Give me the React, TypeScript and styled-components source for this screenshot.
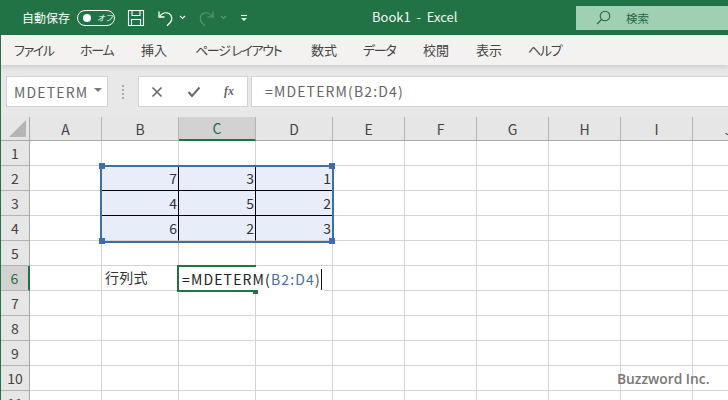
import React from "react";
import styled, { createGlobalStyle } from "styled-components";

const FONT = `"Noto Sans CJK JP", "Noto Sans", sans-serif`;

const Global = createGlobalStyle`
  html, body { margin: 0; padding: 0; background: #fff; }
  body { font-family: ${FONT}; }
`;

const Page = styled.div`
  position: relative;
  width: 728px;
  height: 400px;
  overflow: hidden;
  display: flex;
  flex-direction: column;
  background: #e6e6e6;
  font-family: ${FONT};
`;

const TitleBar = styled.header`
  position: relative;
  flex: 0 0 35px;
  display: flex;
  align-items: center;
  background: #217346;
  color: #fff;
  padding-left: 22px;
`;
const AutoSave = styled.span`
  font-size: 12px;
  width: 48px;
  white-space: nowrap;
`;
const Toggle = styled.span`
  margin-left: 7px;
  width: 38px;
  height: 16px;
  box-sizing: border-box;
  border: 1px solid #fff;
  border-radius: 8px;
  display: flex;
  align-items: center;
  padding-left: 5px;
  gap: 6px;
`;
const Knob = styled.span`
  width: 8px;
  height: 8px;
  border-radius: 50%;
  background: #fff;
`;
const ToggleLabel = styled.span`
  font-size: 8px;
  font-style: italic;
  line-height: 1;
  white-space: nowrap;
`;
const Qat = styled.div`
  display: flex;
  align-items: center;
  margin-left: 12px;
`;
const QatIcon = styled.svg<{ $gap?: number }>`
  display: block;
  margin-left: ${(p) => p.$gap ?? 0}px;
`;
const DocTitle = styled.div`
  position: absolute;
  left: 372px;
  top: 8px;
  font-size: 13px;
  line-height: 18px;
  white-space: pre;
  color: #f2f7f4;
`;
const SearchBox = styled.div`
  margin-left: auto;
  width: 152px;
  height: 24px;
  background: #9fd0b3;
  color: #1c6a3f;
  display: flex;
  align-items: center;
  padding-left: 20px;
  box-sizing: border-box;
  gap: 15px;
  font-size: 11.5px;
`;

const MenuBar = styled.nav`
  flex: 0 0 30px;
  display: flex;
  align-items: center;
  background: #f3f2f1;
  color: #444;
  box-shadow: 0 2px 5px rgba(0, 0, 0, 0.12);
  position: relative;
  z-index: 1;
  padding: 0 0 1px 14px;
  box-sizing: border-box;
`;
const MenuItem = styled.span<{ $w: number; $kana?: boolean }>`
  width: ${(p) => p.$w}px;
  font-size: 13px;
  font-feature-settings: "palt";
  letter-spacing: ${(p) => (p.$kana ? "-1.3px" : "0")};
  white-space: pre;
`;

const FormulaArea = styled.div`
  flex: 0 0 52px;
  box-sizing: border-box;
  padding: 11px 0 10px 6px;
  display: flex;
  align-items: stretch;
  background: #e8e8e8;
`;
const Box = styled.div`
  background: #fff;
  border: 1px solid #d2d2d2;
  box-sizing: border-box;
  display: flex;
  align-items: center;
`;
const NameBox = styled(Box)`
  width: 102px;
  padding-left: 7px;
  color: #666;
  font-size: 14px;
  letter-spacing: 1.15px;
  position: relative;
`;
const Caret = styled.span`
  position: absolute;
  left: 87px;
  top: 11px;
  width: 0;
  height: 0;
  border-left: 4px solid transparent;
  border-right: 4px solid transparent;
  border-top: 4px solid #7a7a7a;
`;
const Dots = styled.div`
  width: 30px;
  display: flex;
  flex-direction: column;
  align-items: center;
  justify-content: center;
  gap: 2px;
`;
const Dot = styled.span`
  width: 2px;
  height: 2px;
  background: #aaa;
`;
const FxBox = styled(Box)`
  width: 110px;
  justify-content: space-between;
  padding: 0 13px 0 12px;
`;
const FxLabel = styled.span`
  font-family: "Liberation Serif", serif;
  font-style: italic;
  font-weight: bold;
  font-size: 12px;
  color: #666;
`;
const FormulaInput = styled(Box)`
  margin-left: 3px;
  flex: 1;
  padding: 0 0 2px 13px;
  color: #666;
  font-size: 14px;
  letter-spacing: 1.15px;
  border-right: none;
`;

const Sheet = styled.div`
  position: relative;
  flex: 1;
  display: grid;
  grid-template-columns: 30px 72px 77px 77px 77px 72px 72px 72px 72px 72px 72px;
  grid-template-rows: 24px repeat(11, 25px);
  background: #fff;
  overflow: hidden;
`;
const LeftEdge = styled.div`
  position: absolute;
  left: 0;
  top: 35px;
  bottom: 0;
  width: 1px;
  background: #217346;
  z-index: 5;
`;
const Corner = styled.div`
  background: #e6e6e6;
  border-right: 1px solid #a8a8a8;
  border-bottom: 1px solid #a8a8a8;
  box-sizing: border-box;
  display: flex;
  align-items: flex-end;
  justify-content: flex-end;
  padding: 0 3px 3px 0;
`;
const Triangle = styled.span`
  width: 0;
  height: 0;
  border-left: 17px solid transparent;
  border-bottom: 17px solid #b4b4b4;
`;
const ColHead = styled.div<{ $sel?: boolean }>`
  background: ${(p) => (p.$sel ? "#d2d2d2" : "#e6e6e6")};
  border-right: 1px solid #b4b4b4;
  border-bottom: ${(p) => (p.$sel ? "2px solid #217346" : "1px solid #a8a8a8")};
  box-sizing: border-box;
  color: ${(p) => (p.$sel ? "#1f6b42" : "#444")};
  font-size: 14px;
  display: flex;
  align-items: center;
  justify-content: center;
`;
const RowHead = styled.div<{ $sel?: boolean }>`
  background: ${(p) => (p.$sel ? "#d2d2d2" : "#e6e6e6")};
  border-right: ${(p) => (p.$sel ? "2px solid #217346" : "1px solid #a8a8a8")};
  border-bottom: 1px solid #b4b4b4;
  box-sizing: border-box;
  color: ${(p) => (p.$sel ? "#1f6b42" : "#444")};
  font-size: 14px;
  display: flex;
  align-items: center;
  justify-content: center;
  padding-left: 1px;
`;
const Cell = styled.div<{ $fill?: boolean; $right?: boolean; $bottom?: boolean; $num?: boolean }>`
  box-sizing: border-box;
  background: ${(p) => (p.$fill ? "#e7eef9" : "#fff")};
  border-right: 1px solid ${(p) => (p.$right ? "#000" : "#d4d4d4")};
  border-bottom: 1px solid ${(p) => (p.$bottom ? "#000" : "#d4d4d4")};
  font-size: 14px;
  letter-spacing: ${(p) => (p.$num ? "0" : "0.3px")};
  color: #333;
  display: flex;
  align-items: center;
  justify-content: ${(p) => (p.$num ? "flex-end" : "flex-start")};
  padding: ${(p) => (p.$num ? "0 1px" : "0 3px 2px")};
  white-space: nowrap;
`;
const RangeFrame = styled.div`
  position: absolute;
  left: 100px;
  top: 48px;
  width: 234px;
  height: 78px;
  box-sizing: border-box;
  border: 2px solid #3f6f9f;
  pointer-events: none;
`;
const Handle = styled.span<{ $x: "l" | "r"; $y: "t" | "b" }>`
  position: absolute;
  width: 6px;
  height: 6px;
  background: #3b6db3;
  ${(p) => (p.$x === "l" ? "left: -3px;" : "right: -3px;")}
  ${(p) => (p.$y === "t" ? "top: -4px;" : "bottom: -3px;")}
`;
const EditText = styled.div`
  position: absolute;
  left: 179px;
  top: 150px;
  width: 145px;
  height: 24px;
  box-sizing: border-box;
  padding-left: 3px;
  background: #fff;
  display: flex;
  align-items: center;
  font-size: 14px;
  color: #222;
  white-space: pre;
  letter-spacing: 1.15px;
`;
const ActiveFrame = styled.div`
  position: absolute;
  left: 177px;
  top: 148px;
  width: 79px;
  height: 27px;
  box-sizing: border-box;
  border: 2px solid #217346;
  border-right: none;
  pointer-events: none;
`;
const FillHandle = styled.span`
  position: absolute;
  right: -2px;
  bottom: -4px;
  width: 5px;
  height: 4px;
  background: #217346;
`;
const RefText = styled.span`
  color: #3f6f9f;
`;
const EndParen = styled.span`
  color: #444;
`;
const Cursor = styled.span`
  display: inline-block;
  width: 1px;
  height: 21px;
  background: #111;
`;
const Watermark = styled.div`
  position: absolute;
  left: 617px;
  top: 369px;
  font-family: "Open Sans", "Noto Sans", sans-serif;
  font-size: 13.8px;
  font-weight: 600;
  line-height: 20px;
  color: #777;
  white-space: nowrap;
  z-index: 6;
`;

const cols = ["A", "B", "C", "D", "E", "F", "G", "H", "I", "J"];
const rows = [1, 2, 3, 4, 5, 6, 7, 8, 9, 10, 11];
const values: Record<string, string> = {
  B2: "7", C2: "3", D2: "1",
  B3: "4", C3: "5", D3: "2",
  B4: "6", C4: "2", D4: "3",
};
const menu: [string, number, boolean][] = [
  ["ファイル", 66, true], ["ホーム", 61, true], ["挿入", 54, false], ["ページ レイアウト", 116, true],
  ["数式", 52, false], ["データ", 60, true], ["校閲", 53, false], ["表示", 52, false], ["ヘルプ", 40, true],
];

export default function App() {
  return (
    <Page>
      <Global />
      <TitleBar>
        <AutoSave>自動保存</AutoSave>
        <Toggle>
          <Knob />
          <ToggleLabel>オフ</ToggleLabel>
        </Toggle>
        <Qat>
          <QatIcon width="18" height="18" viewBox="0 0 18 18" fill="none" stroke="#fff" strokeWidth="1.1">
            <path d="M1.5 1.5h15v15h-15z" />
            <path d="M5 1.5v5h8v-5M4.500 16.500v-6h9v6" />
          </QatIcon>
          <QatIcon $gap={12} width="17" height="18" viewBox="0 0 17 18" fill="none" stroke="#fff" strokeWidth="1.3">
            <path d="M2 2.500v5.500h5.500" />
            <path d="M2.300 7.800C5 4 9 3 12 4.500c3.400 1.800 3.600 6.600 1 9.300l-3 3" />
          </QatIcon>
          <QatIcon $gap={5} width="7" height="5" viewBox="0 0 7 5" fill="none" stroke="#fff" strokeWidth="1.1">
            <path d="M1 1l2.500 2.500L6 1" />
          </QatIcon>
          <QatIcon $gap={12} width="17" height="18" viewBox="0 0 17 18" fill="none" stroke="#5d9a78" strokeWidth="1.1">
            <path d="M15 2.500v5.500H9.500" />
            <path d="M14.700 7.800C12 4 8 3 5 4.500 1.600 6.300 1.400 11.100 4 13.800l3 3" />
          </QatIcon>
          <QatIcon $gap={5} width="7" height="5" viewBox="0 0 7 5" fill="none" stroke="#5d9a78" strokeWidth="1.1">
            <path d="M1 1l2.500 2.500L6 1" />
          </QatIcon>
          <QatIcon $gap={13} width="8" height="8" viewBox="0 0 8 8" fill="none" stroke="#fff" strokeWidth="1.1">
            <path d="M1 1.500h6" />
            <path d="M1 4l3 3 3-3z" fill="#fff" stroke="none" />
          </QatIcon>
        </Qat>
        <DocTitle>{"Book1  -  Excel"}</DocTitle>
        <SearchBox>
          <svg width="15" height="15" viewBox="0 0 15 15" fill="none" stroke="#1c6a3f" strokeWidth="1.1">
            <circle cx="9" cy="6" r="4.800" />
            <path d="M5.500 9.500L1 14" />
          </svg>
          <span>検索</span>
        </SearchBox>
      </TitleBar>

      <MenuBar>
        {menu.map(([label, w, kana]) => (
          <MenuItem key={label} $w={w} $kana={kana}>{label}</MenuItem>
        ))}
      </MenuBar>

      <FormulaArea>
        <NameBox>
          MDETERM
          <Caret />
        </NameBox>
        <Dots>
          <Dot />
          <Dot />
          <Dot />
          <Dot />
        </Dots>
        <FxBox>
          <svg width="12" height="12" viewBox="0 0 12 12" fill="none" stroke="#6a6a6a" strokeWidth="1.700">
            <path d="M1.500 1.500l9 9M10.500 1.500l-9 9" />
          </svg>
          <svg width="14" height="12" viewBox="0 0 14 12" fill="none" stroke="#6a6a6a" strokeWidth="2">
            <path d="M1.500 6l3.500 4L12.500 1.500" />
          </svg>
          <FxLabel>fx</FxLabel>
        </FxBox>
        <FormulaInput>=MDETERM(B2:D4)</FormulaInput>
      </FormulaArea>

      <Sheet>
        <Corner>
          <Triangle />
        </Corner>
        {cols.map((c) => (
          <ColHead key={c} $sel={c === "C"}>{c}</ColHead>
        ))}
        {rows.map((r) => (
          <React.Fragment key={r}>
            <RowHead $sel={r === 6}>{r}</RowHead>
            {cols.map((c) => {
              const id = `${c}${r}`;
              const inRange = r >= 2 && r <= 4 && ["B", "C", "D"].includes(c);
              return (
                <Cell
                  key={id}
                  $fill={inRange}
                  $right={inRange && c !== "D"}
                  $bottom={inRange && r !== 4}
                  $num={inRange}
                >
                  {values[id] ?? (id === "B6" ? "行列式" : "")}
                </Cell>
              );
            })}
          </React.Fragment>
        ))}
        <RangeFrame>
          <Handle $x="l" $y="t" />
          <Handle $x="r" $y="t" />
          <Handle $x="l" $y="b" />
          <Handle $x="r" $y="b" />
        </RangeFrame>
        <EditText>
          =MDETERM(<RefText>B2:D4</RefText>
          <EndParen>)</EndParen>
          <Cursor />
        </EditText>
        <ActiveFrame>
          <FillHandle />
        </ActiveFrame>
      </Sheet>
      <LeftEdge />
      <Watermark>Buzzword Inc.</Watermark>
    </Page>
  );
}
